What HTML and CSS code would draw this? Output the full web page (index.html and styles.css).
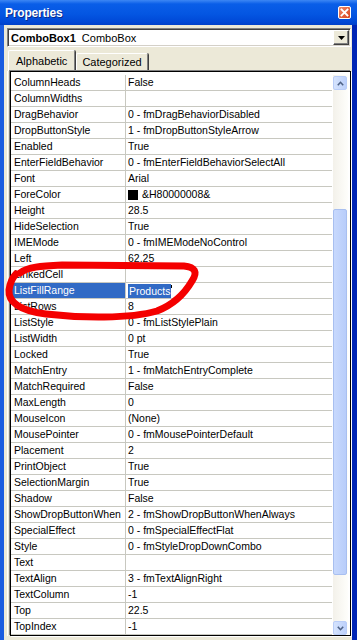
FILE: index.html
```html
<!DOCTYPE html>
<html lang="en">
<head>
  <meta charset="UTF-8" />
  <title>Properties</title>
  <link rel="stylesheet" href="styles.css">
</head>
<body>
  <div class="frame">
    <div class="titlebar">
      <span class="title">Properties</span>
      <span class="close">
        <svg width="9" height="9" viewBox="0 0 9 9"><path d="M1.5 1.5 L7.5 7.5 M7.5 1.5 L1.5 7.5" stroke="#fff" stroke-width="1.8" stroke-linecap="square"/></svg>
      </span>
    </div>
    <div class="client">
      <div class="combo">
        <span class="combo-text"><b>ComboBox1</b> ComboBox</span>
        <span class="combo-btn">
          <svg width="7" height="4" viewBox="0 0 7 4"><path d="M0 0 H7 L3.5 4 Z" fill="#000"/></svg>
        </span>
      </div>
      <div class="tabs">
        <span class="tab active">Alphabetic</span>
        <span class="tab">Categorized</span>
      </div>
      <div class="panel">
        <div class="grid">
          <div class="rows">
            <div class="row"><span class="name">ColumnHeads</span><span class="value">False</span></div>
            <div class="row"><span class="name">ColumnWidths</span><span class="value"></span></div>
            <div class="row"><span class="name">DragBehavior</span><span class="value">0 - fmDragBehaviorDisabled</span></div>
            <div class="row"><span class="name">DropButtonStyle</span><span class="value">1 - fmDropButtonStyleArrow</span></div>
            <div class="row"><span class="name">Enabled</span><span class="value">True</span></div>
            <div class="row"><span class="name">EnterFieldBehavior</span><span class="value">0 - fmEnterFieldBehaviorSelectAll</span></div>
            <div class="row"><span class="name">Font</span><span class="value">Arial</span></div>
            <div class="row"><span class="name">ForeColor</span><span class="value"><i class="swatch"></i>&amp;H80000008&amp;</span></div>
            <div class="row"><span class="name">Height</span><span class="value">28.5</span></div>
            <div class="row"><span class="name">HideSelection</span><span class="value">True</span></div>
            <div class="row"><span class="name">IMEMode</span><span class="value">0 - fmIMEModeNoControl</span></div>
            <div class="row"><span class="name">Left</span><span class="value">62.25</span></div>
            <div class="row"><span class="name">LinkedCell</span><span class="value"></span></div>
            <div class="row selected"><span class="name">ListFillRange</span><span class="value"><span class="sel-text">Products</span><i class="caret"></i></span></div>
            <div class="row"><span class="name">ListRows</span><span class="value">8</span></div>
            <div class="row"><span class="name">ListStyle</span><span class="value">0 - fmListStylePlain</span></div>
            <div class="row"><span class="name">ListWidth</span><span class="value">0 pt</span></div>
            <div class="row"><span class="name">Locked</span><span class="value">True</span></div>
            <div class="row"><span class="name">MatchEntry</span><span class="value">1 - fmMatchEntryComplete</span></div>
            <div class="row"><span class="name">MatchRequired</span><span class="value">False</span></div>
            <div class="row"><span class="name">MaxLength</span><span class="value">0</span></div>
            <div class="row"><span class="name">MouseIcon</span><span class="value">(None)</span></div>
            <div class="row"><span class="name">MousePointer</span><span class="value">0 - fmMousePointerDefault</span></div>
            <div class="row"><span class="name">Placement</span><span class="value">2</span></div>
            <div class="row"><span class="name">PrintObject</span><span class="value">True</span></div>
            <div class="row"><span class="name">SelectionMargin</span><span class="value">True</span></div>
            <div class="row"><span class="name">Shadow</span><span class="value">False</span></div>
            <div class="row"><span class="name">ShowDropButtonWhen</span><span class="value">2 - fmShowDropButtonWhenAlways</span></div>
            <div class="row"><span class="name">SpecialEffect</span><span class="value">0 - fmSpecialEffectFlat</span></div>
            <div class="row"><span class="name">Style</span><span class="value">0 - fmStyleDropDownCombo</span></div>
            <div class="row"><span class="name">Text</span><span class="value"></span></div>
            <div class="row"><span class="name">TextAlign</span><span class="value">3 - fmTextAlignRight</span></div>
            <div class="row"><span class="name">TextColumn</span><span class="value">-1</span></div>
            <div class="row"><span class="name">Top</span><span class="value">22.5</span></div>
            <div class="row"><span class="name">TopIndex</span><span class="value">-1</span></div>
          </div>
          <div class="scrollbar">
            <span class="sb-btn">
              <svg width="7" height="5" viewBox="0 0 7 5"><path d="M0.8 4.2 L3.5 1.3 L6.2 4.2" fill="none" stroke="#4d6185" stroke-width="1.6"/></svg>
            </span>
            <div class="sb-track">
              <div class="sb-thumb"></div>
            </div>
            <span class="sb-btn">
              <svg width="7" height="5" viewBox="0 0 7 5"><path d="M0.8 0.8 L3.5 3.7 L6.2 0.8" fill="none" stroke="#4d6185" stroke-width="1.6"/></svg>
            </span>
          </div>
        </div>
      </div>
    </div>

    <!-- hand drawn red mark around ListFillRange -->
    <svg class="scribble" width="357" height="640" viewBox="0 0 357 640">
      <path d="M20 273 C28 267 40 266 62 265 L184 266 C195 267 198 272 192 281 C185 293 175 304 157 311 C130 319 80 318 46 314 C20 311 8 302 9 290 C10 283 12 278 16 274" fill="none" stroke="#f40000" stroke-width="7" stroke-linecap="round" stroke-linejoin="round"/>
    </svg>
  </div>
</body>
</html>
```

FILE: styles.css
```css
body {
  margin: 0;
  background-color: #0a46d6;
  font-family: "Liberation Sans", Arial, sans-serif;
  font-size: 10.5px;
  color: #000;
}
.frame {
  position: relative;
  width: 357px;
  height: 640px;
  overflow: hidden;
  display: flex;
  flex-direction: column;
  background: linear-gradient(to right, #1a5ce0 0, #1a5ce0 4px, #0a3fd0 4px, #0a3fd0 351px, #0025b5 352px);
}
.titlebar {
  height: 25px;
  flex: none;
  display: flex;
  align-items: center;
  justify-content: space-between;
  padding: 0 6px 0 5px;
  background: linear-gradient(to bottom, #3d87f4 0, #0a5ee8 4px, #0456e2 14px, #0048d6 22px, #0040c8 25px);
}
.title {
  color: #fff;
  font-weight: bold;
  font-size: 12px;
  letter-spacing: -0.2px;
  text-shadow: 1px 1px 0 #0a2a8a;
  padding-top: 1px;
}
.close {
  width: 13px;
  height: 13px;
  box-sizing: border-box;
  border: 1px solid #fff;
  border-radius: 2px;
  background: linear-gradient(to bottom right, #f08a6a, #d8431c);
  display: flex;
  align-items: center;
  justify-content: center;
}
.client {
  flex: 1;
  margin: 0 5px 4px 4px;
  background-color: #ece9d8;
  padding: 3px 1px 4px 3px;
  display: flex;
  flex-direction: column;
}
.combo {
  height: 19px;
  flex: none;
  box-sizing: border-box;
  background-color: #fff;
  border: 1px solid;
  border-color: #808080 #fff #fff #808080;
  box-shadow: inset 1px 1px 0 #404040, inset -1px -1px 0 #d4d0c8;
  display: flex;
  align-items: center;
  justify-content: space-between;
  padding: 0 1px 0 3px;
}
.combo-text {
  font-size: 11px;
}
.combo-text b {
  margin-right: 3px;
}
.combo-btn {
  width: 16px;
  height: 15px;
  box-sizing: border-box;
  background-color: #ece9d8;
  border: 1px solid;
  border-color: #fff #404040 #404040 #fff;
  box-shadow: inset -1px -1px 0 #808080;
  display: flex;
  align-items: center;
  justify-content: center;
}
.tabs {
  height: 21px;
  flex: none;
  margin-top: 3px;
  padding-left: 1px;
  display: flex;
  align-items: flex-end;
}
.tab {
  height: 18px;
  box-sizing: border-box;
  padding: 2px 5px 0 5px;
  font-size: 11px;
  border-top: 1px solid #fff;
  border-left: 1px solid #fff;
  border-right: 1px solid #808080;
  box-shadow: 1px 0 0 #404040;
  border-radius: 2px 2px 0 0;
  margin-right: 1px;
}
.tab.active {
  height: 21px;
  padding: 4px 7px 0 7px;
  margin-right: 1px;
}
.panel {
  flex: 1;
  min-height: 0;
  border-left: 1px solid #fff;
  padding: 0 0 0 2px;
  display: flex;
}
.grid {
  flex: 1;
  min-width: 0;
  display: flex;
  background-color: #fff;
  border: 1px solid #000;
  box-shadow: -1px -1px 0 #808080, 1px 1px 0 #fff;
  padding: 3px 2px 0 0;
  overflow: hidden;
}
.rows {
  flex: 1;
  min-width: 0;
}
.row {
  display: flex;
  height: 16px;
  box-sizing: border-box;
  border-bottom: 1px solid #c8c8c0;
  line-height: 15px;
  white-space: nowrap;
}
.name {
  width: 115px;
  flex: none;
  padding-left: 3px;
  box-sizing: border-box;
  border-right: 1px solid #c8c8c0;
}
.value {
  flex: 1;
  padding-left: 2px;
  overflow: hidden;
  display: flex;
  align-items: center;
}
.swatch {
  width: 10px;
  height: 10px;
  background-color: #000;
  margin-right: 4px;
}
.selected .name {
  background-color: #316ac5;
  color: #fff;
}
.sel-text {
  background-color: #316ac5;
  color: #fff;
  padding: 0 1px;
  line-height: 14px;
}
.caret {
  width: 1px;
  height: 3px;
  background-color: #000;
  align-self: flex-start;
  margin-top: 2px;
}
.scrollbar {
  width: 15px;
  flex: none;
  display: flex;
  flex-direction: column;
  margin-left: 1px;
  background: linear-gradient(to right, #f3f1ea, #fefefb);
}
.sb-btn {
  height: 14px;
  flex: none;
  margin: 1px 1px 0 0;
  box-sizing: border-box;
  border: 1px solid #b9cdf8;
  border-radius: 2px;
  background: linear-gradient(to right, #d5e3fd, #bcd0fb);
  display: flex;
  align-items: center;
  justify-content: center;
}
.sb-track {
  flex: 1;
  padding-top: 119px;
  padding-bottom: 45px;
  display: flex;
}
.sb-thumb {
  flex: 1;
  margin-right: 1px;
  border: 1px solid #a8bff0;
  border-radius: 2px;
  background: linear-gradient(to right, #c8d9fd, #b8cdfa);
}
.scribble {
  position: absolute;
  top: 0;
  left: 0;
  pointer-events: none;
}
```
